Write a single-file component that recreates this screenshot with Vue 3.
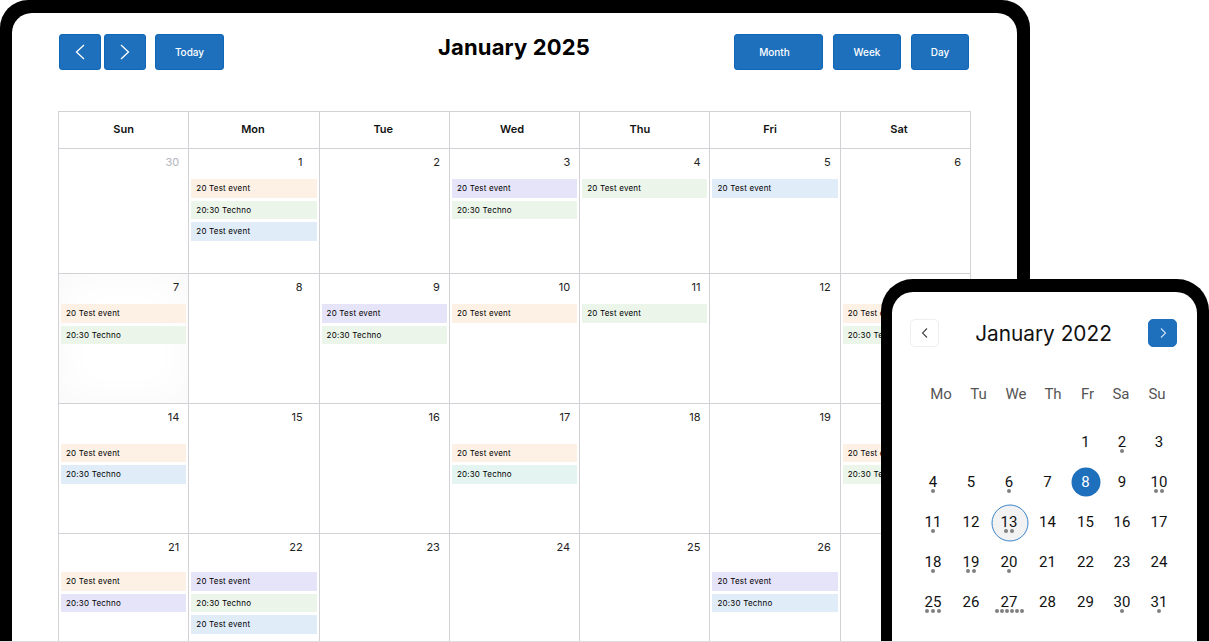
<template>
  <div class="stage">
    <section class="tablet">
      <div class="screen">
        <header class="toolbar">
          <div class="btn-group btn-group-left">
            <button class="btn btn-icon">
              <svg width="12" height="18" viewBox="0 0 12 18" fill="none"><path d="M10 2L2.5 9L10 16" stroke="#fff" stroke-width="1.3" /></svg>
            </button>
            <button class="btn btn-icon">
              <svg width="12" height="18" viewBox="0 0 12 18" fill="none"><path d="M2 2L9.5 9L2 16" stroke="#fff" stroke-width="1.3" /></svg>
            </button>
            <button class="btn btn-today">Today</button>
          </div>
          <h1 class="title">January 2025</h1>
          <div class="btn-group btn-group-right">
            <button class="btn btn-month">Month</button>
            <button class="btn btn-week">Week</button>
            <button class="btn btn-day">Day</button>
          </div>
        </header>

        <div class="calendar">
          <div v-for="name in weekdays" :key="name" class="head-cell">{{ name }}</div>
          <div
            v-for="(cell, i) in cells"
            :key="i"
            class="cell"
            :class="[`row-${Math.floor(i / 7)}`, { muted: cell.muted, shaded: cell.day === 7 }]"
          >
            <div class="day-num">{{ cell.day }}</div>
            <div class="events">
              <div v-for="(ev, j) in cell.events" :key="j" class="event" :class="ev">
                {{ j % 2 ? '20:30 Techno' : '20 Test event' }}
              </div>
            </div>
          </div>
        </div>
      </div>
    </section>

    <section class="phone">
      <div class="phone-screen">
        <div class="phone-head">
          <button class="nav-btn">
            <svg width="10" height="12" viewBox="0 0 10 12" fill="none"><path d="M7 1.5L2.5 6L7 10.5" stroke="#444" stroke-width="1.1" /></svg>
          </button>
          <h2 class="phone-title">January 2022</h2>
          <button class="nav-btn nav-btn-on">
            <svg width="10" height="12" viewBox="0 0 10 12" fill="none"><path d="M3 1.5L7.5 6L3 10.5" stroke="#cfe2f5" stroke-width="1.1" /></svg>
          </button>
        </div>
        <div class="mini-week">
          <span v-for="d in miniWeek" :key="d">{{ d }}</span>
        </div>
        <div class="mini-grid">
          <span v-for="n in 4" :key="'blank' + n"></span>
          <div
            v-for="d in 31"
            :key="d"
            class="mini-day"
            :class="{ selected: d === 8, today: d === 13 }"
          >
            <span class="mini-num">{{ d }}</span>
            <span v-if="dots[d]" class="dots" :class="{ tight: dots[d] > 3 }">
              <i v-for="n in dots[d]" :key="n"></i>
            </span>
          </div>
        </div>
      </div>
    </section>
  </div>
</template>

<script setup>
const weekdays = ['Sun', 'Mon', 'Tue', 'Wed', 'Thu', 'Fri', 'Sat']
const miniWeek = ['Mo', 'Tu', 'We', 'Th', 'Fr', 'Sa', 'Su']

const P = 'peach'
const G = 'green'
const B = 'blue'
const V = 'violet'
const T = 'teal'

const eventsByDay = {
  1: [P, G, B],
  3: [V, G],
  4: [G],
  5: [B],
  7: [P, G],
  9: [V, G],
  10: [P],
  11: [G],
  13: [P, G],
  14: [P, B],
  17: [P, T],
  20: [P, G],
  21: [P, V],
  22: [V, G, B],
  26: [V, B],
}

const cells = [{ day: 30, muted: true, events: [] }]
for (let day = 1; day <= 27; day++) {
  cells.push({ day, muted: false, events: eventsByDay[day] || [] })
}

const dots = { 2: 1, 4: 1, 6: 1, 10: 2, 11: 1, 13: 2, 18: 1, 19: 2, 20: 1, 25: 3, 27: 6, 30: 1, 31: 1 }
</script>

<style>
html,
body {
  margin: 0;
  background: #fff;
  overflow: hidden;
}
</style>

<style scoped>
.stage {
  position: relative;
  box-sizing: border-box;
  width: 1209px;
  height: 642px;
  overflow: hidden;
  background: #fff;
  border-bottom: 1px solid #ddd;
}
.tablet {
  box-sizing: border-box;
  width: 1030px;
  height: 642px;
  background: #000;
  border-radius: 28px 28px 0 0;
  padding: 13px 13px 0 12px;
}
.screen {
  box-sizing: border-box;
  height: 629px;
  background: #fff;
  border-radius: 20px 20px 0 0;
  padding: 21px 47px 0 46px;
  overflow: hidden;
}
.toolbar {
  display: grid;
  grid-template-columns: 1fr auto 1fr;
  align-items: center;
  height: 36px;
}
.btn-group {
  display: flex;
}
.btn-group-left {
  padding-left: 1px;
}
.btn-group-right {
  justify-content: flex-end;
  gap: 10px;
  padding-right: 1px;
}
.btn {
  box-sizing: border-box;
  height: 36px;
  padding: 0;
  margin: 0;
  display: flex;
  align-items: center;
  justify-content: center;
  background: #1e70bd;
  border: 1px solid #0d66b8;
  border-radius: 3px;
  color: #fff;
  font-family: Inter, 'Liberation Sans', sans-serif;
  font-size: 10px;
  font-weight: 500;
}
.btn-icon {
  width: 42px;
  margin-right: 3px;
}
.btn-today {
  width: 69px;
  margin-left: 6px;
}
.btn-month {
  width: 89px;
  padding-right: 8px;
}
.btn-week {
  width: 68px;
}
.btn-day {
  width: 58px;
}
.title {
  margin: 0 0 10px;
  font-family: Inter, 'Liberation Sans', sans-serif;
  font-size: 22px;
  font-weight: 700;
  letter-spacing: 0.15px;
  color: #000;
}
.calendar {
  margin-top: 41px;
  display: grid;
  grid-template-columns: repeat(7, 130.3px);
  grid-template-rows: 37px 125px 130px 130px 130px;
  border-top: 1px solid #d2d2d6;
  border-left: 1px solid #d2d2d6;
  width: 913px;
  box-sizing: border-box;
}
.head-cell {
  display: flex;
  align-items: center;
  justify-content: center;
  box-sizing: border-box;
  padding-bottom: 3px;
  border-right: 1px solid #d2d2d6;
  border-bottom: 1px solid #d2d2d6;
  font-family: Inter, 'Liberation Sans', sans-serif;
  font-size: 11px;
  font-weight: 600;
  color: #111;
}
.head-cell:nth-child(2),
.head-cell:nth-child(3) {
  padding-right: 2px;
}
.head-cell:nth-child(4) {
  padding-right: 5px;
}
.head-cell:nth-child(5),
.head-cell:nth-child(6) {
  padding-right: 10px;
}
.head-cell:nth-child(7) {
  padding-right: 13px;
}
.cell {
  box-sizing: border-box;
  border-right: 1px solid #d2d2d6;
  border-bottom: 1px solid #d2d2d6;
  padding: 5px 2px 0;
}
.shaded {
  box-shadow: inset 0 0 40px rgba(0, 0, 0, 0.03);
}
.day-num {
  height: 16px;
  line-height: 16px;
  text-align: right;
  padding-right: 7px;
  font-family: Inter, 'Liberation Sans', sans-serif;
  font-size: 11px;
  color: #222;
}
.cell:nth-child(7n + 2) .day-num {
  padding-right: 14px;
}
.muted .day-num {
  color: #b4b4bc;
}
.events {
  margin-top: 9px;
  display: flex;
  flex-direction: column;
  gap: 3px;
}
.row-2 .events {
  margin-top: 18.5px;
}
.row-3 .events {
  margin-top: 17px;
}
.event {
  box-sizing: border-box;
  height: 18.5px;
  line-height: 18.5px;
  padding-left: 5px;
  font-family: Inter, 'Liberation Sans', sans-serif;
  font-size: 8px;
  letter-spacing: 0.2px;
  color: #000;
  white-space: nowrap;
  overflow: hidden;
}
.peach {
  background: #fdf0e5;
}
.green {
  background: #ebf5ea;
}
.blue {
  background: #e0edf9;
}
.violet {
  background: #e6e4f9;
}
.teal {
  background: #e4f5f1;
}

.phone {
  position: absolute;
  left: 881px;
  top: 279px;
  box-sizing: border-box;
  width: 328px;
  height: 400px;
  padding: 13px 12px 0 11px;
  background: #000;
  border-radius: 32px 32px 0 0;
}
.phone-screen {
  box-sizing: border-box;
  height: 387px;
  background: #fff;
  border-radius: 21px 21px 0 0;
  padding: 27px 20px 0 18px;
}
.phone-head {
  display: flex;
  align-items: center;
  justify-content: space-between;
  height: 28px;
}
.nav-btn {
  box-sizing: border-box;
  width: 29px;
  height: 28px;
  padding: 0;
  display: flex;
  align-items: center;
  justify-content: center;
  background: #fff;
  border: 1px solid #eee;
  border-radius: 5px;
}
.nav-btn-on {
  background: #1e70bd;
  border-color: #1e70bd;
}
.phone-title {
  margin: 0;
  font-family: Inter, 'Liberation Sans', sans-serif;
  font-size: 20.8px;
  font-weight: 400;
  color: #111;
}
.mini-week {
  margin: 38px 0 0 12px;
  display: grid;
  grid-template-columns: 38px 37px 38px 36px 33px 34px 38px;
  height: 18px;
  line-height: 18px;
  text-align: center;
  font-family: Roboto, 'Liberation Sans', sans-serif;
  font-size: 15px;
  color: #555;
}
.mini-grid {
  margin: 19px 0 0 4px;
  display: grid;
  grid-template-columns: 38px 38px 38px 39px 37px 36px 38px;
  grid-auto-rows: 40px;
}
.mini-day {
  position: relative;
  display: flex;
  align-items: center;
  justify-content: center;
  font-family: Roboto, 'Liberation Sans', sans-serif;
  font-size: 15px;
  color: #111;
}
.mini-num {
  position: relative;
}
.selected::before,
.today::before {
  content: '';
  position: absolute;
  left: 50%;
  top: 50%;
  transform: translate(-50%, -50%);
  border-radius: 50%;
}
.selected::before {
  width: 29px;
  height: 29px;
  background: #1e70bd;
}
.selected .mini-num {
  color: #fff;
}
.today::before {
  box-sizing: border-box;
  width: 37px;
  height: 37px;
  margin-left: 0.5px;
  margin-top: 1px;
  background: #f2f2f2;
  border: 1.2px solid #3b84c9;
}
.dots {
  position: absolute;
  left: 0;
  right: 0;
  top: 27px;
  display: flex;
  justify-content: center;
  gap: 2px;
}
.dots.tight {
  gap: 1px;
}
.dots i {
  display: block;
  flex: none;
  width: 4px;
  height: 4px;
  border-radius: 50%;
  background: #808080;
}
</style>
